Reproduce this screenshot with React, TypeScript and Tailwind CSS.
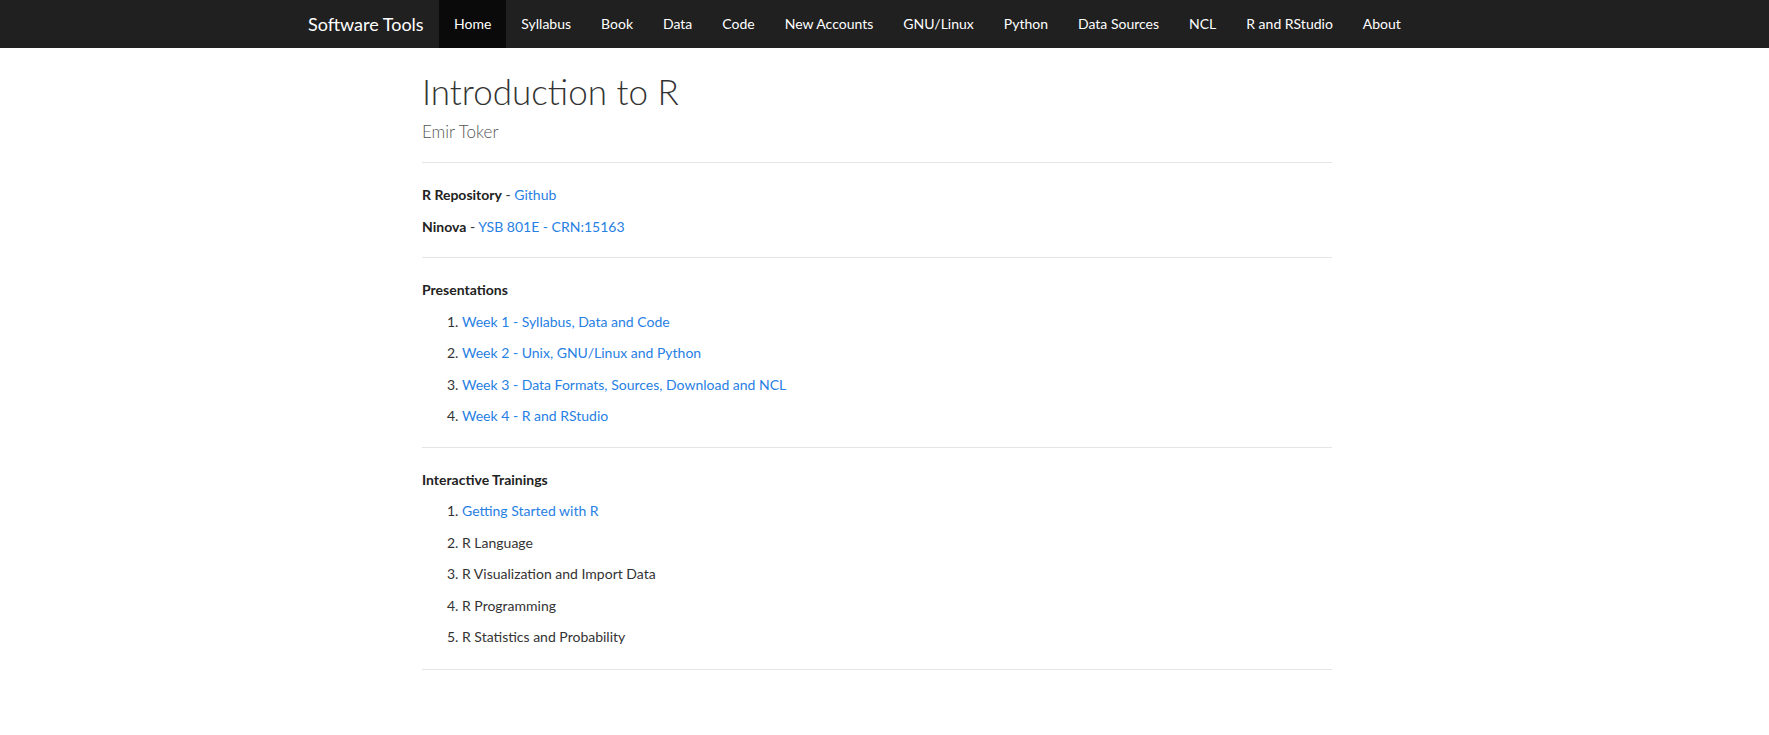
const navItems = ["Home", "Syllabus", "Book", "Data", "Code", "New Accounts", "GNU/Linux", "Python", "Data Sources", "NCL", "R and RStudio", "About"];

const presentations = [
  "Week 1 - Syllabus, Data and Code",
  "Week 2 - Unix, GNU/Linux and Python",
  "Week 3 - Data Formats, Sources, Download and NCL",
  "Week 4 - R and RStudio",
];

const trainings: { label: string; link?: boolean }[] = [
  { label: "Getting Started with R", link: true },
  { label: "R Language" },
  { label: "R Visualization and Import Data" },
  { label: "R Programming" },
  { label: "R Statistics and Probability" },
];

function Navbar() {
  return (
    <nav className="h-[48px] bg-[#202020]">
      <div className="pr-[15px]">
        <div className="mx-auto flex h-[48px] w-[1170px] items-center">
          <a className="w-[147px] shrink-0 pl-[16px] text-[18px] leading-[20px] text-white">Software Tools</a>
          <ul className="flex h-full">
            {navItems.map((n) => (
              <li key={n} className={n === "Home" ? "bg-[#0a0a0a]" : ""}>
                <a className="block px-[15px] py-[14px] text-[14px] leading-[20px] text-white">{n}</a>
              </li>
            ))}
          </ul>
        </div>
      </div>
    </nav>
  );
}

export default function App() {
  return (
    <div className="min-h-screen bg-white font-['Lato',sans-serif] text-[14px] leading-[21.5px] text-[#333333]">
      <Navbar />
      <div className="pr-[15px]">
        <main className="mx-auto w-[940px] px-[15px]">
          <header className="pt-[23px] pb-[19px]">
            <h1 className="text-[35px] font-light leading-[40px] text-[#333333]">Introduction to R</h1>
            <p className="mt-[10px] text-[17px] font-light leading-[22px] text-[#555555]">Emir Toker</p>
          </header>

          <section className="flex flex-col gap-[10px] border-t border-[#e5e5e5] pt-[21px] pb-[20px]">
            <p>
              <b className="text-[#222222]">R Repository</b> - <a className="text-[#2780e3]">Github</a>
            </p>
            <p>
              <b className="text-[#222222]">Ninova</b> - <a className="text-[#2780e3]">YSB 801E - CRN:15163</a>
            </p>
          </section>

          <section className="flex flex-col gap-[10px] border-t border-[#e5e5e5] pt-[21px] pb-[20px]">
            <p className="font-bold text-[#222222]">Presentations</p>
            <ol className="flex list-decimal flex-col gap-[10px] pl-[40px]">
              {presentations.map((p) => (
                <li key={p}>
                  <a className="text-[#2780e3]">{p}</a>
                </li>
              ))}
            </ol>
          </section>

          <section className="flex flex-col gap-[10px] border-y border-[#e5e5e5] pt-[21px] pb-[21px]">
            <p className="font-bold text-[#222222]">Interactive Trainings</p>
            <ol className="flex list-decimal flex-col gap-[10px] pl-[40px]">
              {trainings.map((t) => (
                <li key={t.label}>{t.link ? <a className="text-[#2780e3]">{t.label}</a> : t.label}</li>
              ))}
            </ol>
          </section>
        </main>
      </div>
    </div>
  );
}
